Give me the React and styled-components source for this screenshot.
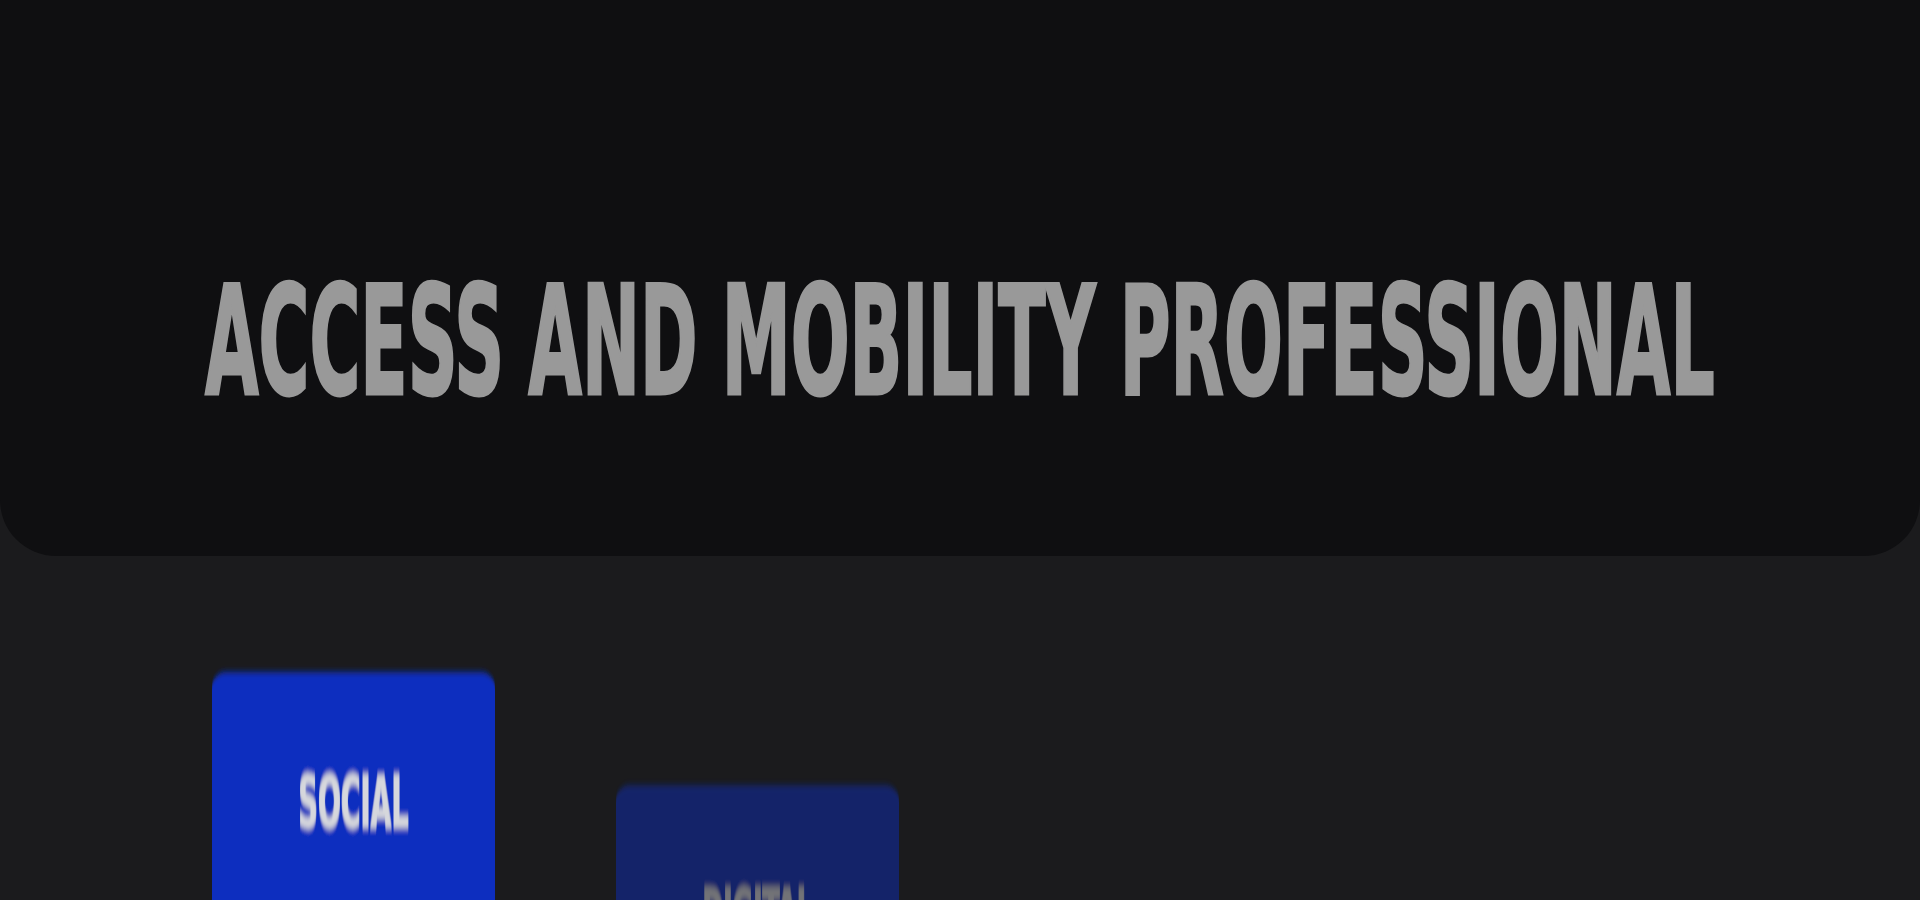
import React, { useLayoutEffect, useRef, useState } from "react";
import styled, { createGlobalStyle } from "styled-components";

const GlobalStyle = createGlobalStyle`
  html, body {
    margin: 0;
    padding: 0;
    background: #1b1b1d;
    overflow: hidden;
  }
  body {
    font-family: "Liberation Sans Narrow", "DejaVu Sans Condensed", "Liberation Sans", sans-serif;
  }
`;

const Page = styled.div`
  width: 1920px;
  height: 900px;
  background: #1b1b1d;
  overflow: hidden;
`;

const Hero = styled.header`
  height: 556px;
  background: #0f0f11;
  border-radius: 0 0 56px 56px;
  display: flex;
  justify-content: center;
  padding-top: 266px;
  box-sizing: border-box;
`;

const Squeeze = styled.span`
  display: inline-block;
  font-family: "Liberation Sans Narrow", "DejaVu Sans Condensed", "Liberation Sans", sans-serif;
  font-stretch: condensed;
  font-weight: 700;
  font-size: ${(p) => p.$size}px;
  line-height: 1;
  color: ${(p) => p.$color};
  -webkit-text-stroke: ${(p) => p.$stroke}px ${(p) => p.$color};
  white-space: nowrap;
  transform-origin: center top;
`;

const Fit = styled.div`
  width: ${(p) => p.$width}px;
  display: flex;
  justify-content: center;
`;

// squeezes a line of text horizontally so it fills the given width
function Condensed({ children, width, size, color, stroke = 0 }) {
  const ref = useRef(null);
  const [sx, setSx] = useState(1);

  useLayoutEffect(() => {
    const measure = () => {
      if (ref.current) setSx(width / ref.current.offsetWidth);
    };
    measure();
    if (document.fonts) document.fonts.ready.then(measure);
  }, [width]);

  return (
    <Fit $width={width}>
      <Squeeze
        ref={ref}
        $size={size}
        $color={color}
        $stroke={stroke}
        style={{ transform: `scaleX(${sx})` }}
      >
        {children}
      </Squeeze>
    </Fit>
  );
}

const Cards = styled.section`
  display: flex;
  align-items: flex-start;
  gap: 121px;
  padding: 116px 0 0 212px;
`;

const Card = styled.div`
  width: 283px;
  height: 260px;
  flex: none;
  margin-top: ${(p) => p.$offset}px;
  border-radius: 15px;
  background: #0f2fbf;
  opacity: ${(p) => (p.$dim ? 0.47 : 1)};
  display: flex;
  align-items: center;
  justify-content: center;
  filter: url(#motion);
`;

export default function App() {
  return (
    <Page>
      <GlobalStyle />
      <svg width="0" height="0" style={{ position: "absolute" }}>
        <filter id="motion" x="-10%" y="-10%" width="120%" height="120%">
          <feGaussianBlur stdDeviation="0.4 3.2" />
        </filter>
      </svg>

      <Hero>
        <Condensed width={1510} size={152} color="#999999" stroke={3}>
          ACCESS AND MOBILITY PROFESSIONAL
        </Condensed>
      </Hero>

      <Cards>
        <Card $offset={0}>
          <Condensed width={110} size={71} color="#d6d7dc" stroke={2}>
            SOCIAL
          </Condensed>
        </Card>
        <Card $offset={113} $dim>
          <Condensed width={110} size={71} color="#d6d7dc" stroke={2}>
            DIGITAL
          </Condensed>
        </Card>
      </Cards>
    </Page>
  );
}
